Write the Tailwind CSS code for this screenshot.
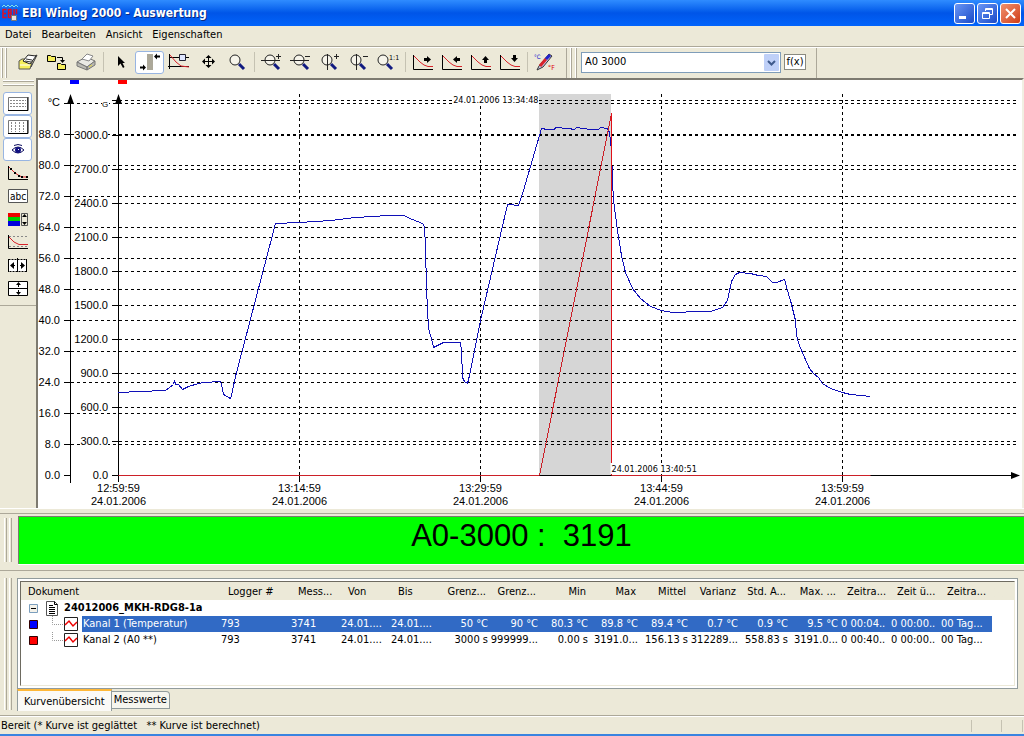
<!DOCTYPE html>
<html lang="de">
    <head>
        <meta charset="UTF-8" />
        <title>EBI Winlog 2000 - Auswertung</title>
        <meta name="viewport" content="width=device-width, initial-scale=1.0" />
        <script src="https://cdn.jsdelivr.net/npm/@tailwindcss/browser@4"></script>
    </head>
    <body
        class="h-screen flex flex-col overflow-hidden bg-[#ece9d8] text-black text-[11px] leading-4 font-['DejaVu_Sans_Condensed','Liberation_Sans',sans-serif]"
    >
        <!-- Titelleiste -->
        <header
            class="h-[26px] shrink-0 flex items-center pl-0.5 pr-[3px] gap-1 bg-linear-to-b from-[#2f8cff] via-[#0055e8] to-[#0264fb]"
        >
            <svg class="w-4 h-[18px] shrink-0" viewBox="0 0 16 18" fill="none" aria-hidden="true">
                <path d="M0 3l2-2 2 2 2-2 2 2 2-2 2 2 2-2 2 2" stroke="#7fe0e8" />
                <path d="M4.500 5.500H1v8h3.500M1 9.500h3M6.500 5v9M6.500 5.500h2.500v3.500H6.500M9 9v4.500H6.500M12 5v6M14.500 5v5" stroke="#e01020" stroke-width="1.500" />
                <path d="M9.500 11.500h5v5h-5z" fill="#e4e4e4" stroke="#777" />
            </svg>
            <h1 class="flex-1 text-[12px] font-bold text-white [text-shadow:1px_1px_#0a2a80]">
                EBI Winlog 2000 - Auswertung
            </h1>
            <div class="flex gap-0.5">
                <button aria-label="Minimieren" class="size-[21px] rounded-[3px] border border-white bg-linear-to-br from-[#6a96f5] to-[#1b49c8]">
                    <svg class="size-[19px]" viewBox="0 0 19 19"><path d="M4 12h7v3H4z" fill="#fff" /></svg>
                </button>
                <button aria-label="Wiederherstellen" class="size-[21px] rounded-[3px] border border-white bg-linear-to-br from-[#6a96f5] to-[#1b49c8]">
                    <svg class="size-[19px]" viewBox="0 0 19 19" fill="none" stroke="#fff">
                        <path d="M7.500 7V4.500h7v6H12M7 5.500h8M4.500 8.500h7v6h-7zM4 9.500h8" />
                    </svg>
                </button>
                <button aria-label="Schließen" class="size-[21px] rounded-[3px] border border-white bg-linear-to-br from-[#f0906c] to-[#cf3a12]">
                    <svg class="size-[19px]" viewBox="0 0 19 19"><path d="M5 5l9 9M14 5l-9 9" stroke="#fff" stroke-width="2" /></svg>
                </button>
            </div>
        </header>

        <!-- Menü -->
        <nav class="h-[22px] shrink-0 flex items-start pt-px pl-[5px] gap-2.5 border-b border-white shadow-[inset_0_-1px_#aca899]">
            <a href="#">Datei</a>
            <a href="#">Bearbeiten</a>
            <a href="#">Ansicht</a>
            <a href="#">Eigenschaften</a>
        </nav>

        <!-- Werkzeugleiste -->
        <div class="h-[30px] shrink-0 flex items-stretch">
            <div class="w-[9px] mr-1 flex justify-end gap-0.5 pr-0.5">
                <span class="w-0.5 border-l border-white border-r border-r-[#aca899]"></span>
                <span class="w-0.5 border-l border-white border-r border-r-[#aca899]"></span>
            </div>
            <div id="toolbar" class="flex items-center pb-0.5"></div>
            <div class="ml-[7px] w-[9px] flex gap-[3px] border-l border-[#aca899] pl-[3px]">
                <span class="w-0.5 border-l border-white border-r border-r-[#aca899]"></span>
                <span class="w-0.5 border-l border-white border-r border-r-[#aca899]"></span>
            </div>
            <div class="flex items-center gap-[3px] pb-0.5 pl-[6px] pr-[10px] border-r border-[#aca899]">
                <div class="relative">
                    <select
                        aria-label="Berechnung"
                        class="appearance-none block w-[200px] h-[21px] pl-[3px] bg-white border border-[#7f9db9] rounded-none"
                    >
                        <option>A0 3000</option>
                    </select>
                    <svg class="absolute right-0.5 top-0.5 w-[15px] h-[17px] pointer-events-none" viewBox="0 0 15 17">
                        <rect width="15" height="17" rx="1" fill="#bfd0f8" />
                        <path d="M4 7l3.500 3.500L11 7" fill="none" stroke="#3f5a8c" stroke-width="2" />
                    </svg>
                </div>
                <button class="w-[22px] h-[16px] leading-3 bg-white border border-[#8a8a80]">f(x)</button>
            </div>
        </div>

        <main class="flex-1 min-h-0 flex">
            <!-- Seitenleiste -->
            <aside class="w-9 shrink-0">
                <div class="flex flex-col h-[228px] border-b border-[#aca899] pl-[3px]">
                    <div class="h-[14px] flex flex-col gap-0.5 pt-0.5 pr-0.5">
                        <span class="h-0.5 border-t border-white border-b border-b-[#aca899]"></span>
                        <span class="h-0.5 border-t border-white border-b border-b-[#aca899]"></span>
                    </div>
                    <div id="sidebar" class="flex flex-col"></div>
                </div>
            </aside>

            <!-- Diagramm -->
            <section class="flex-1 min-w-0 bg-white border-l-2 border-t-2 border-[#7d7a70] border-r-2 border-r-[#f1efe2]">
                <svg id="chart" class="block w-full h-full font-['Liberation_Sans',Arial,sans-serif] text-[11px]" role="img" aria-label="Temperatur und A0"></svg>
            </section>
        </main>

        <!-- Ergebnis -->
        <section class="h-[63px] shrink-0 flex pt-[7px] pb-[6px] border-t border-white border-b border-b-[#aca899] shadow-[inset_0_4px_#ece9d8,inset_0_5px_#aca899]">
            <div class="w-[18px] flex gap-0.5 pl-1 pt-0.5 pb-0.5">
                <span class="w-[3px] border-l border-white border-r border-r-[#aca899]"></span>
                <span class="w-[3px] border-l border-white border-r border-r-[#aca899]"></span>
            </div>
            <div class="flex-1 bg-[#00ff00] border-l border-t border-[#7d7a70] shadow-[0_1px_#fff] text-center text-[31px] leading-[38px] whitespace-pre font-['Liberation_Sans',Arial,sans-serif]">A0-3000 :  3191</div>
        </section>

        <!-- Dokumentliste -->
        <section class="h-[145px] shrink-0 flex pt-[7px] border-b border-[#aca899]">
            <div class="w-[17px] flex gap-0.5 pl-1 pb-[5px]">
                <span class="w-[3px] border-l border-white border-r border-r-[#aca899]"></span>
                <span class="w-[3px] border-l border-white border-r border-r-[#aca899]"></span>
            </div>
            <div class="flex-1 min-w-0 pr-[6px]">
                <div class="h-[111px] p-0.5 bg-white border border-[#919b9c]">
                    <div class="h-full overflow-hidden border-l border-t border-[#6d6a60] border-r border-r-[#ece9d8] border-b border-b-[#ece9d8] bg-linear-to-b from-[#ece9d8] from-[18px] to-white to-[18px]">
                        <table class="table-fixed w-[971px] border-collapse bg-white">
                            <colgroup>
                                <col class="w-[195px]" />
                                <col class="w-[70px]" />
                                <col class="w-[50px]" />
                                <col class="w-[50px]" />
                                <col class="w-[54px]" />
                                <col span="10" class="w-[50px]" />
                                <col class="w-[52px]" />
                            </colgroup>
                            <thead>
                                <tr id="head" class="h-[18px] bg-[#ece9d8]"></tr>
                            </thead>
                            <tbody id="rows"></tbody>
                        </table>
                    </div>
                </div>
                <div class="flex items-start" role="tablist">
                    <button role="tab" aria-selected="true" class="h-[22px] px-[6px] pt-0.5 bg-[#fbfaf7] border-t-2 border-t-[#ffb838] border-x border-x-[#919b9c]">Kurvenübersicht</button>
                    <button role="tab" aria-selected="false" class="h-[18px] mt-0.5 px-0.5 bg-[#f6f5ee] border border-l-0 border-[#919b9c] rounded-tr-sm">Messwerte</button>
                </div>
            </div>
        </section>

        <!-- Statusleiste -->
        <footer class="h-5 shrink-0 flex items-center pl-px border-t border-t-white border-b-2 border-b-[#3a84e0]">
            <span class="flex-1 whitespace-pre">Bereit (* Kurve ist geglättet   ** Kurve ist berechnet)</span>
            <span class="w-[30px] h-3 border-l border-[#c5c2b2]"></span>
            <span class="w-[21px] h-3 border-l border-[#c5c2b2]"></span>
            <span class="w-[2px] h-3 border-l border-[#c5c2b2]"></span>
        </footer>

        <script>
            // --- Symbole (22 x 18) ---
            const lens = (x) =>
                `<circle cx="${x}" cy="7" r="5" fill="#f6f4ea" stroke="#222"/><path d="M${x + 4} 11l5 5" stroke="#111a80" stroke-width="3"/>`;
            const curve =
                '<path d="M1.500 2v14.500H21" stroke="#000"/><path d="M2 3l6 6 4 3 4 1.500h5" stroke="#d8232a"/>';

            const tools = [
                ["Öffnen", '<path d="M2 8l3-2h11l-3 10H2z" fill="#f5ee5a" stroke="#555"/><path d="M6 8l5-6 8 1-6 8z" fill="#fff" stroke="#222"/><path d="M9 6l6 1M8 8l6 1M18 3l2-1-6 12" stroke="#333"/><path d="M3 12h10" stroke="#fff"/>'],
                ["Export", '<path d="M1.500 2.500h3l1 1h4v5h-8z" fill="#f5ee5a" stroke="#000"/><path d="M11.500 10.500h3l1 1h4v5h-8z" fill="#f5ee5a" stroke="#000"/><path d="M11 4.500h5.500V8" stroke="#000"/><path d="M14 7h5l-2.500 3z" fill="#000"/>'],
                ["Drucken", '<path d="M2 9l9-5 9 4-8 6z" fill="#e9e9e4" stroke="#777"/><path d="M2 9v4l10 4v-3zM12 14v3l8-5V8z" fill="#b9b9b2" stroke="#777"/><path d="M7 6l5-5 6 2-4 5z" fill="#fff" stroke="#888"/><path d="M14 14l3-2" stroke="#e5d840"/>'],
                null,
                ["Zeiger", '<path d="M8 3v10l2.500-2.500L13 15l1.500-1-2-4H15z" fill="#000"/>'],
                ["Bereich", '<path d="M8 1h6v16H8z" fill="#aca899"/><path d="M1 14.500h4M17 3.500h4" stroke="#000" stroke-width="2"/><path d="M4 11.500v6l3-3zM18 .5v6l-3-3z" fill="#000"/>', true],
                ["Messpunkt", '<path d="M1.500 1v15M0 13.500h21M1 4.500h20" stroke="#000"/><path d="M2 2l6 7 5 4 8 1" stroke="#d8232a"/><path d="M11.500 1.500h6v6h-6z" fill="#dfe6ff" stroke="#223"/>'],
                ["Verschieben", '<path d="M11.500 4v10M6 8.500h11" stroke="#000"/><path d="M8.500 5l3-3 3 3zM8.500 12l3 3 3-3zM8 5.500l-3 3 3 3zM15 5.500l3 3-3 3z" fill="#000"/>'],
                ["Lupe", lens(9)],
                null,
                ["X und Y vergrößern", lens(9) + '<path d="M0 7.500h19M15 3.500h5M17.500 1v5" stroke="#222"/>'],
                ["X und Y verkleinern", lens(9) + '<path d="M0 7.500h19M15 3.500h5" stroke="#222"/>'],
                ["Vergrößern", lens(8) + '<path d="M8.500 1v16M15 3.500h5M17.500 1v5" stroke="#222"/>'],
                ["Verkleinern", lens(8) + '<path d="M8.500 1v16M15 3.500h5" stroke="#222"/>'],
                ["Originalgröße", lens(6) + '<text x="12" y="7" font-size="7" fill="#000">1:1</text>'],
                null,
                ["Nach rechts", curve + '<path d="M12 6.500h4" stroke="#000" stroke-width="3"/><path d="M15 3l4 3.500L15 10z" fill="#000"/>'],
                ["Nach links", curve + '<path d="M15 6.500h4" stroke="#000" stroke-width="3"/><path d="M16 3l-4 3.500L16 10z" fill="#000"/>'],
                ["Nach oben", curve + '<path d="M15.500 6v4" stroke="#000" stroke-width="3"/><path d="M12 7l3.500-4L19 7z" fill="#000"/>'],
                ["Nach unten", curve + '<path d="M15.500 2v4" stroke="#000" stroke-width="3"/><path d="M12 5l3.500 4L19 5z" fill="#000"/>'],
                null,
                ["Einheit", '<path d="M3 17l2-4L15 1l3 2-9 11z" fill="#c8c8e8" stroke="#333"/><path d="M6 13l6-7" stroke="#d8232a" stroke-width="3"/><path d="M12 6l4-4" stroke="#2222cc" stroke-width="3"/><text x="0" y="6" font-size="6" fill="#00c">°C</text><text x="14" y="17" font-size="7" fill="#d00">°F</text>'],
            ];

            const sideTools = [
                ["Gitter horizontal", '<path d="M1.500 2.500h19v13h-19z" fill="#fff" stroke="#777"/><path d="M3 5.500h16M3 8.500h16M3 11.500h16" stroke="#888" stroke-dasharray="2 1"/><path d="M1 15.500h20V2" stroke="#000"/>', true],
                ["Gitter vertikal", '<path d="M1.500 2.500h19v13h-19z" fill="#fff" stroke="#777"/><path d="M4.500 4v10M8.500 4v10M12.500 4v10M16.500 4v10" stroke="#888" stroke-dasharray="2 1"/><path d="M1 15.500h20V2" stroke="#000"/>', true],
                ["Anzeigen", '<path d="M5 9q6-6 12 0q-6 6-12 0z" fill="#fff" stroke="#101060"/><circle cx="11" cy="9" r="3" fill="#101080"/><path d="M11 8h1v1h-1z" fill="#fff"/><path d="M7 4.500q4-2 8 0" stroke="#101060"/>', true],
                ["Punkte", '<path d="M1.500 2v13.500H21" stroke="#000"/><path d="M2 3l5 5 4 3 4 2h5" stroke="#d8232a"/><path d="M3 4h2v2H3zM7 8h2v2H7zM11 11h2v2h-2zM14 12h2v2h-2zM19 12h2v2h-2z" fill="#000"/>'],
                ["Text", '<path d="M1.500 2.500h19v13h-19z" fill="#fff" stroke="#555"/><text x="3" y="13" font-size="10" fill="#000">abc</text>'],
                ["Farben", '<path d="M1 3h12v4H1z" fill="#e00"/><path d="M1 7h12v4H1z" fill="#0c0"/><path d="M1 11h12v5H1z" fill="#00d"/><path d="M14.500 3.500h6v12h-6z" fill="#ece9d8" stroke="#555"/><path d="M15 7l2.500-3L20 7zM15 12l2.500 3 2.500-3z" fill="#000"/>'],
                ["Grenzwerte", '<path d="M1.500 2v13.500H21" stroke="#000"/><path d="M2 3.500h19M2 13.500h19" stroke="#888" stroke-dasharray="2 2"/><path d="M2 4l5 5 5 2.500h9" stroke="#d8232a"/>'],
                ["Breite anpassen", '<path d="M1.500 3.500h18v12h-18z" fill="#fff" stroke="#000" stroke-dasharray="2 1"/><path d="M10.500 2v14M1.500 3v13M19.500 3v13M5 9.500h3M13 9.500h3" stroke="#000"/><path d="M7 6v7L3 9.500zM14 6v7l4-3.500z" fill="#000"/>'],
                ["Höhe anpassen", '<path d="M1.500 2.500h19v14h-19z" fill="#fff" stroke="#000"/><path d="M1 9.500h20M11.500 4v4M11.500 11v4" stroke="#000"/><path d="M9 6l2.500-3L14 6zM9 13l2.500 3 2.500-3z" fill="#000"/>'],
            ];

            const icon = (body) =>
                `<svg class="w-[22px] h-[18px] shrink-0" viewBox="0 0 22 18" fill="none" aria-hidden="true">${body}</svg>`;
            const pressed = "bg-white border-[#98b5e2] rounded-[3px]";
            const button = (t) =>
                `<button aria-label="${t[0]}" class="w-[29px] h-[23px] flex items-center justify-center border ${t[2] ? pressed : "border-transparent"}">${icon(t[1])}</button>`;

            document.getElementById("toolbar").innerHTML = tools
                .map((t) =>
                    t ? button(t) : '<span class="w-[6px] h-5 flex justify-center"><i class="w-px bg-[#c5c2b2]"></i></span>'
                )
                .join("");

            document.getElementById("sidebar").innerHTML = sideTools.map(button).join("");

            // --- Tabelle ---
            const heads = ["Dokument", "Logger #", "Mess...", "Von", "Bis", "Grenz...", "Grenz...", "Min", "Max", "Mittel", "Varianz", "Std. A...", "Max. ...", "Zeitra...", "Zeit ü...", "Zeitra..."];
            const channels = [
                { name: "Kanal 1 (Temperatur)", color: "#0000ff", selected: true, v: ["793", "3741", "24.01....", "24.01....", "50 °C", "90 °C", "80.3 °C", "89.8 °C", "89.4 °C", "0.7 °C", "0.9 °C", "9.5 °C", "0 00:04..", "0 00:00..", "00 Tag..."] },
                { name: "Kanal 2 (A0 **)", color: "#ff0000", v: ["793", "3741", "24.01....", "24.01....", "3000 s", "999999...", "0.00 s", "3191.0...", "156.13 s", "312289...", "558.83 s", "3191.0...", "0 00:40..", "0 00:00..", "00 Tag..."] },
            ];
            const isRight = (i) => i >= 5 && i <= 12;

            document.getElementById("head").innerHTML = heads
                .map((h, i) => {
                    const pad = i === 0 ? "pl-[7px]" : isRight(i) ? "text-right pr-1" : i > 12 ? "pl-[7px]" : "pl-3";
                    return `<th class="p-0 pt-0.5 font-normal text-left whitespace-nowrap overflow-hidden ${pad}">${h}</th>`;
                })
                .join("");

            const docRow = `
                <tr class="h-4">
                    <td colspan="16" class="p-0">
                        <div class="h-4 flex items-center pl-2">
                            <svg class="size-[9px] mr-2" viewBox="0 0 9 9"><path d="M.5.500h8v8h-8z" fill="#f4f2ea" stroke="#7b9ebd"/><path d="M2 4.500h5" stroke="#000"/></svg>
                            <svg class="w-3 h-[15px] mr-[6px]" viewBox="0 0 12 15"><path d="M.5.500h8l3 3v11H.5z" fill="#fff" stroke="#555"/><path d="M8.500.500v3h3M3 4.500h4M3 6.500h6M3 8.500h6M3 10.500h6M3 12.500h6" fill="none" stroke="#000"/></svg>
                            <b>24012006_MKH-RDG8-1a</b>
                        </div>
                    </td>
                </tr>`;

            document.getElementById("rows").innerHTML =
                docRow +
                channels
                    .map((c) => {
                        const sel = c.selected ? "bg-[#316ac5] text-white" : "";
                        const cells = c.v
                            .map((v, k) => {
                                const pad = isRight(k + 1) ? "justify-end pr-0.5" : k > 11 ? "pl-px" : "pl-[5px]";
                                return `<td class="p-0 ${sel}"><div class="flex whitespace-nowrap ${pad}"><span>${v}</span></div></td>`;
                            })
                            .join("");
                        return `
                        <tr class="h-4">
                            <td class="p-0">
                                <div class="h-4 flex items-center pl-2">
                                    <svg class="size-[9px] mr-[14px]" viewBox="0 0 9 9"><path d="M.5.500h8v8h-8z" fill="${c.color}" stroke="#300"/></svg>
                                    <svg class="w-3 h-4" viewBox="0 0 12 16"><path d="M.5 0v8.500H12" fill="none" stroke="#999" stroke-dasharray="1 1"/></svg>
                                    <svg class="size-[14px] mr-1" viewBox="0 0 14 14"><path d="M.5.500h13v13H.5z" fill="#fff" stroke="#222"/><path d="M1 8l4-4 4 5 4-4" fill="none" stroke="#e00" stroke-width="1.500"/></svg>
                                    <span class="flex-1 h-4 pl-px whitespace-nowrap ${sel}">${c.name}</span>
                                </div>
                            </td>${cells}
                        </tr>`;
                    })
                    .join("");

            // --- Diagramm ---
            const temperature = [
                [80, 312], [101, 311], [127, 310], [135, 304], [136, 300], [137, 304], [140, 304], [144, 309], [150, 306], [160, 303],
                [166, 302], [182, 301], [184, 308], [185, 314], [192, 318], [193, 315], [197, 296], [237, 143], [261, 142], [293, 140],
                [317, 137], [350, 135], [365, 135], [374, 139], [384, 143], [386, 146], [387, 166], [388, 208], [390, 248], [394, 262],
                [395, 267], [405, 262], [422, 262], [423, 270], [424, 297], [426, 301], [429, 303], [431, 295], [442, 240], [469, 124],
                [475, 124], [476, 125], [480, 125], [485, 110], [503, 48], [509, 49], [516, 49], [517, 47], [530, 48], [536, 49],
                [538, 47], [552, 49], [560, 49], [562, 47], [569, 48], [571, 52], [573, 70], [574, 100], [575, 120], [579, 150],
                [583, 175], [587, 192], [594, 208], [602, 218], [612, 226], [623, 230], [634, 232], [662, 231], [672, 231], [684, 227],
                [689, 220], [693, 201], [697, 194], [701, 192], [712, 193], [720, 195], [728, 196], [734, 202], [738, 202], [746, 199],
                [749, 210], [752, 220], [757, 240], [758, 255], [761, 265], [766, 277], [771, 288], [775, 293], [780, 297], [784, 303],
                [792, 308], [804, 312], [812, 314], [822, 315], [832, 316],
            ];
            const times = ["12:59:59", "13:14:59", "13:29:59", "13:44:59", "13:59:59"];
            const chart = document.getElementById("chart");

            function drawChart() {
                const w = chart.clientWidth;
                const k = w / 984; // Zeitachse folgt der Breite
                const x = (v) => Math.round(80 + (v - 80) * k) + 0.5;
                const base = 395.5;
                const end = w - 3;
                let s = "";

                s += `<rect x="${x(501) - 0.5}" y="14" width="${x(573) - x(501)}" height="381" fill="#d6d6d6"/>`;
                s += '<path d="M32 0h9v4h-9z" fill="#00f"/><path d="M80 0h9v4h-9z" fill="#f00"/>';

                // Gitter
                for (let i = 1; i <= 12; i++) {
                    const y = Math.round(395 - i * 30.97) + 0.5;
                    s += `<path d="M33 ${y}H${end}" stroke="#000" stroke-dasharray="3 3"/>`;
                }
                for (let i = 1; i <= 11; i++) {
                    const y = Math.round(395 - i * 34.05) + 0.5;
                    s += `<path d="M81 ${y}H${end}" stroke="#000" stroke-dasharray="3 3"/>`;
                }
                times.forEach((t, i) => {
                    const tx = x(80 + i * 181);
                    if (i) s += `<path d="M${tx} 14V395" stroke="#000" stroke-dasharray="3 3"/>`;
                    s += `<path d="M${tx} 396v6" stroke="#000"/>`;
                    s += `<text x="${tx}" y="412" text-anchor="middle">${t}</text>`;
                    s += `<text x="${tx}" y="425" text-anchor="middle">24.01.2006</text>`;
                });

                // Achsen
                s += `<path d="M32.500 18V403M80.500 18V402M80 ${base}H${end}" stroke="#000"/>`;
                s += '<path d="M29 24l3.500-10 3.500 10zM77 24l3.500-10 3.500 10z"/>';
                s += `<path d="M${end - 8} 392l9 3.500-9 3.500z"/>`;
                for (let i = 0; i <= 12; i++) {
                    const y = Math.round(395 - i * 30.97) + 0.5;
                    s += `<path d="M26 ${y}h7" stroke="#000"/>`;
                    if (i < 12) s += `<text x="22" y="${y + 3}" text-anchor="end">${(i * 8).toFixed(1)}</text>`;
                }
                for (let i = 0; i <= 11; i++) {
                    const y = Math.round(395 - i * 34.05) + 0.5;
                    s += `<path d="M74 ${y}h7" stroke="#000"/>`;
                    if (i === 11) continue;
                    const wide = i > 3 ? 34 : i ? 28 : 16;
                    s += `<rect x="${70 - wide}" y="${y - 5}" width="${wide}" height="10" fill="#fff"/>`;
                    s += `<text x="70" y="${y + 3}" text-anchor="end">${(i * 300).toFixed(1)}</text>`;
                }
                s += '<text x="22" y="26" text-anchor="end">°C</text>';
                s += '<rect x="64" y="20" width="7" height="8" fill="#fff"/><text x="64" y="27" font-size="8">G</text>';

                // Kurven
                const line = temperature.map(([px, py]) => `${x(px)},${py + 0.5}`).join(" ");
                s += `<polyline points="${line}" fill="none" stroke="#1010b8" shape-rendering="crispEdges"/>`;
                s += `<path d="M${x(501)} ${base}L${x(573)} 33.500" stroke="#cc2028" shape-rendering="crispEdges"/>`;
                s += `<rect x="${x(80)}" y="395" width="${x(501) - x(80)}" height="1" fill="#cc2028"/>`;
                s += `<rect x="${x(573)}" y="395" width="${x(832) - x(573)}" height="1" fill="#cc2028"/>`;
                s += `<rect x="${x(573) - 0.5}" y="33" width="1" height="362" fill="#e01018"/>`;

                // Zeitmarken
                s += `<rect x="${x(501) - 87}" y="14" width="86" height="11" fill="#fff"/>`;
                s += `<text x="${x(501) - 1}" y="23" text-anchor="end" class="text-[9px] font-['DejaVu_Sans_Condensed',sans-serif]">24.01.2006 13:34:48</text>`;
                s += `<rect x="${x(573) - 1}" y="383" width="86" height="11" fill="#fff"/>`;
                s += `<text x="${x(573)}" y="392" class="text-[9px] font-['DejaVu_Sans_Condensed',sans-serif]">24.01.2006 13:40:51</text>`;

                chart.innerHTML = s;
            }

            new ResizeObserver(drawChart).observe(chart);
        </script>
    </body>
</html>
